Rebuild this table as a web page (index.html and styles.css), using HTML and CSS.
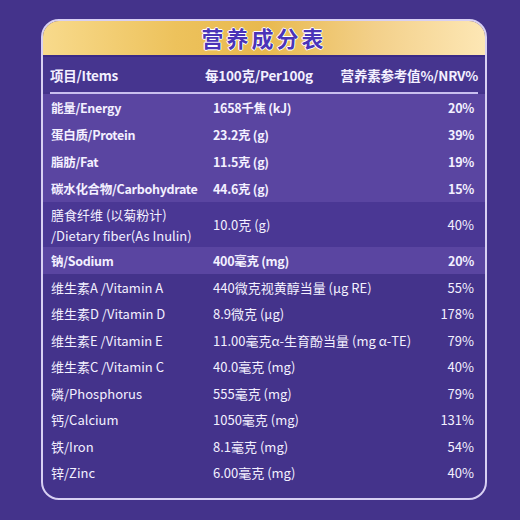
FILE: index.html
```html
<!DOCTYPE html>
<html lang="zh-CN">
  <head>
    <meta charset="UTF-8" />
    <meta name="viewport" content="width=device-width, initial-scale=1.0" />
    <title>营养成分表</title>
    <link rel="stylesheet" href="styles.css">
  </head>

  <body>
    <div class="card">
      <div class="card-title">营养成分表</div>

      <div class="table-head">
        <span>项目/Items</span>
        <span>每100克/Per100g</span>
        <span class="nrv">营养素参考值%/NRV%</span>
      </div>
      <div class="divider"></div>

      <!-- Main nutrients -->
      <div class="row light bold">
        <span>能量/Energy</span><span>1658千焦 (kJ)</span><span class="nrv">20%</span>
      </div>
      <div class="row light bold">
        <span>蛋白质/Protein</span><span>23.2克 (g)</span><span class="nrv">39%</span>
      </div>
      <div class="row light bold">
        <span>脂肪/Fat</span><span>11.5克 (g)</span><span class="nrv">19%</span>
      </div>
      <div class="row light bold">
        <span>碳水化合物/Carbohydrate</span><span>44.6克 (g)</span><span class="nrv">15%</span>
      </div>
      <div class="row mid tall">
        <span>膳食纤维 (以菊粉计)<br>/Dietary fiber(As Inulin)</span><span>10.0克 (g)</span><span class="nrv">40%</span>
      </div>
      <div class="row light bold">
        <span>钠/Sodium</span><span>400毫克 (mg)</span><span class="nrv">20%</span>
      </div>

      <!-- Vitamins and minerals -->
      <div class="row">
        <span>维生素A /Vitamin A</span><span>440微克视黄醇当量 (μg RE)</span><span class="nrv">55%</span>
      </div>
      <div class="row">
        <span>维生素D /Vitamin D</span><span>8.9微克 (μg)</span><span class="nrv">178%</span>
      </div>
      <div class="row">
        <span>维生素E /Vitamin E</span><span>11.00毫克α-生育酚当量 (mg α-TE)</span><span class="nrv">79%</span>
      </div>
      <div class="row">
        <span>维生素C /Vitamin C</span><span>40.0毫克 (mg)</span><span class="nrv">40%</span>
      </div>
      <div class="row">
        <span>磷/Phosphorus</span><span>555毫克 (mg)</span><span class="nrv">79%</span>
      </div>
      <div class="row">
        <span>钙/Calcium</span><span>1050毫克 (mg)</span><span class="nrv">131%</span>
      </div>
      <div class="row">
        <span>铁/Iron</span><span>8.1毫克 (mg)</span><span class="nrv">54%</span>
      </div>
      <div class="row">
        <span>锌/Zinc</span><span>6.00毫克 (mg)</span><span class="nrv">40%</span>
      </div>
    </div>
  </body>
</html>
```

FILE: styles.css
```css
* {
  margin: 0;
  padding: 0;
  box-sizing: border-box;
}

body {
  font-family: "Noto Sans CJK SC", "Noto Sans", sans-serif;
  background-color: #44338b;
  color: #f3f0ff;
  width: 520px;
  height: 520px;
  overflow: hidden;
}

.card {
  margin: 19px 0 0 41px;
  width: 446px;
  height: 481px;
  border: 2px solid #d8d0f3;
  border-radius: 18px;
  background-color: #44338b;
  overflow: hidden;
}

.card-title {
  height: 36px;
  background: linear-gradient(90deg, #f8da8c 0%, #edc25c 30%, #e8b94e 50%, #f3d08a 75%, #fde7b5 100%);
  border-bottom: 2px solid #3b2a86;
  text-align: center;
  font-size: 22px;
  font-weight: bold;
  line-height: 33px;
  letter-spacing: 3px;
  color: #4b34b8;
  text-shadow: 1px 0 0 #fff, -1px 0 0 #fff, 0 1px 0 #fff, 0 -1px 0 #fff;
}

.table-head {
  display: flex;
  align-items: center;
  height: 35px;
  padding: 0 7px 0 7px;
  font-size: 13.5px;
  font-weight: bold;
  letter-spacing: -0.2px;
  background-color: #46358f;
}

.table-head span:first-child {
  width: 155px;
}

.table-head .nrv {
  margin-left: auto;
}

.divider {
  height: 2px;
  margin: 0 7px;
  background-color: #c9bfef;
}

.row {
  display: grid;
  grid-template-columns: 162px 1fr 50px;
  align-items: center;
  height: 26.5px;
  padding: 0 11px 0 8px;
  font-size: 13px;
  white-space: nowrap;
}

.row .nrv {
  text-align: right;
}

.row.light {
  background-color: #5a45a1;
  height: 27px;
}

.row.mid {
  background-color: #4a3794;
}

.row.tall {
  height: 45px;
  line-height: 21px;
}

.row.bold {
  font-weight: bold;
  font-size: 12.5px;
  letter-spacing: -0.3px;
}
```
